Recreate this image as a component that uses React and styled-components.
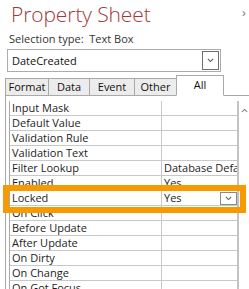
import React from "react";
import styled, { createGlobalStyle } from "styled-components";

const Global = createGlobalStyle`
  html, body { margin: 0; padding: 0; background: #fff; }
  body { font-family: "Open Sans", "Noto Sans", sans-serif; }
  * { box-sizing: border-box; }
`;

const Sheet = styled.div`
  position: relative;
  width: 249px;
  height: 289px;
  overflow: hidden;
  background: #fff;
  font-size: 11px;
  color: #222;
`;

const Header = styled.div`
  display: flex;
  justify-content: space-between;
  align-items: flex-start;
  padding: 0 3px 0 11px;
  height: 29px;
`;

const Title = styled.h1`
  margin: 0;
  font-family: "Open Sans", sans-serif;
  font-weight: 300;
  font-size: 21px;
  line-height: 29px;
  color: #a4373a;
  letter-spacing: -0.1px;
`;

const Chevron = styled.span`
  margin-top: 6px;
  color: #7a7a7a;
  font-size: 13px;
  line-height: 13px;
`;

const SelType = styled.div`
  padding-left: 9px;
  height: 20px;
  line-height: 20px;
  color: #333;
  white-space: pre;
`;

const Combo = styled.div`
  margin: 0 0 0 7px;
  width: 214px;
  height: 23px;
  border: 1px solid #ababab;
  display: flex;
  align-items: center;
  justify-content: space-between;
  padding: 0 1px 0 4px;
  color: #111;
`;

const DropBtn = styled.div`
  width: ${p => p.$w}px;
  height: ${p => p.$h}px;
  border: 1px solid ${p => p.$c};
  background: #fff;
  display: flex;
  align-items: center;
  justify-content: center;
`;

const TabBar = styled.div`
  display: flex;
  align-items: flex-end;
  margin-top: 3px;
  padding-left: 5px;
  height: 21px;
`;

const Tab = styled.div`
  width: ${p => p.$w}px;
  height: ${p => (p.$active ? 21 : 18)}px;
  border: 1px solid #a9a9a9;
  border-left: ${p => (p.$first || p.$active ? "1px solid #a9a9a9" : "none")};
  border-bottom: ${p => (p.$active ? "1px solid #fff" : "1px solid #a9a9a9")};
  background: ${p => (p.$active ? "#fff" : "#ececec")};
  display: flex;
  justify-content: center;
  align-items: ${p => (p.$active ? "flex-start" : "center")};
  padding-top: ${p => (p.$active ? "2px" : "0")};
  color: #111;
  line-height: 14px;
  margin-left: ${p => (p.$active ? "-1px" : "0")};
`;

const Filler = styled.div`
  flex: 1;
  border-bottom: 1px solid #a9a9a9;
`;

const Panel = styled.div`
  margin-left: 5px;
  border-left: 1px solid #a9a9a9;
  padding: 5px 0 0 3px;
  display: flex;
`;

const Grid = styled.div`
  width: 230px;
  border-left: 1px solid #a9a9a9;
  border-right: 2px solid #c3c3c3;
`;

const Row = styled.div`
  display: grid;
  grid-template-columns: 151px 1fr;
  height: 15px;
  border-bottom: 1px solid #c8c8c8;
`;

const Cell = styled.div`
  padding-left: ${p => (p.$value ? 2 : 2)}px;
  border-left: ${p => (p.$value ? "1px solid #c8c8c8" : "none")};
  line-height: 14px;
  white-space: nowrap;
  overflow: hidden;
  display: flex;
  align-items: center;
  justify-content: space-between;
  color: #1d1d1d;
`;

const ScrollBar = styled.div`
  flex: 1;
  display: flex;
  justify-content: center;
  padding-top: 7px;
`;

const Highlight = styled.div`
  position: absolute;
  left: 3px;
  top: 185px;
  width: 243px;
  height: 28px;
  border: 6px solid #f79a00;
  pointer-events: none;
`;

const Arrow = ({ up, size = 7, color = "#555" }) => (
  <svg width={size} height={size / 2 + 1} viewBox="0 0 8 5">
    <path
      d={up ? "M1 4.5 L4 1.5 L7 4.5" : "M1 1 L4 4 L7 1"}
      fill="none"
      stroke={color}
      strokeWidth="1.2"
    />
  </svg>
);

const rows = [
  ["Input Mask", ""],
  ["Default Value", ""],
  ["Validation Rule", ""],
  ["Validation Text", ""],
  ["Filter Lookup", "Database Default"],
  ["Enabled", "Yes"],
  ["Locked", "Yes", true],
  ["On Click", ""],
  ["Before Update", ""],
  ["After Update", ""],
  ["On Dirty", ""],
  ["On Change", ""],
  ["On Got Focus", ""],
];

const tabs = [
  ["Format", 44],
  ["Data", 41],
  ["Event", 45],
  ["Other", 42],
];

export default function App() {
  return (
    <Sheet>
      <Global />
      <Header>
        <Title>Property Sheet</Title>
        <Chevron>›</Chevron>
      </Header>
      <SelType>Selection type:  Text Box</SelType>
      <Combo>
        <span>DateCreated</span>
        <DropBtn $w={17} $h={19} $c="#6f6f6f">
          <Arrow />
        </DropBtn>
      </Combo>
      <TabBar>
        {tabs.map(([t, w], i) => (
          <Tab key={t} $w={w} $first={i === 0}>
            {t}
          </Tab>
        ))}
        <Tab $w={48} $active>
          All
        </Tab>
        <Filler />
      </TabBar>
      <Panel>
        <Grid>
          {rows.map(([label, value, dd]) => (
            <Row key={label}>
              <Cell>{label}</Cell>
              <Cell $value>
                <span>{value}</span>
                {dd && (
                  <DropBtn $w={17} $h={13} $c="#8a8a8a">
                    <Arrow color="#666" />
                  </DropBtn>
                )}
              </Cell>
            </Row>
          ))}
        </Grid>
        <ScrollBar>
          <Arrow up color="#777" />
        </ScrollBar>
      </Panel>
      <Highlight />
    </Sheet>
  );
}
